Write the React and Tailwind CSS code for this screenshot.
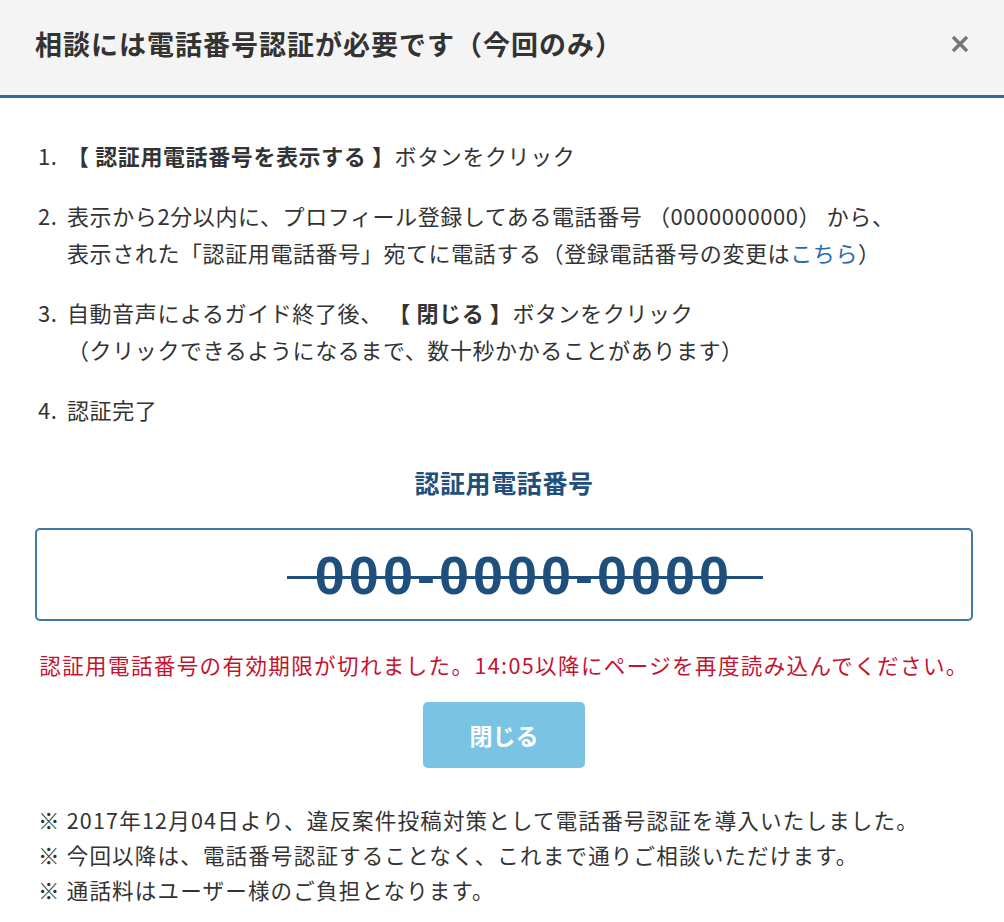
import React from 'react';

const FONT = "font-['Noto_Sans_CJK_JP','Noto_Sans',sans-serif]";

function Step({ num, children }) {
  return (
    <li className="flex">
      <span className="w-[29px] shrink-0">{num}.</span>
      <div>{children}</div>
    </li>
  );
}

export default function App() {
  return (
    <div className={`w-[1004px] h-[922px] bg-white text-[#333] ${FONT}`}>
      {/* Header */}
      <header className="h-[98px] bg-[#f4f4f4] border-b-[3px] border-[#2b68a4] flex items-center justify-between pl-[35px] pr-[32px] pb-[8px]">
        <h1 className="text-[27px] font-bold tracking-[1px] leading-none">
          相談には電話番号認証が必要です（今回のみ）
        </h1>
        <button className="w-[24px] h-[24px] flex items-center justify-center">
          <svg width="18" height="18" viewBox="0 0 18 18">
            <path d="M2 2 L16 16 M16 2 L2 16" stroke="#777" strokeWidth="3.5" strokeLinecap="butt" />
          </svg>
        </button>
      </header>

      {/* Body */}
      <main className="pl-[35px] pr-[31px] pt-[39px]">
        <ol className="pl-[3px] flex flex-col gap-[23px] text-[22px] leading-[37px] tracking-[0.6px]">
          <Step num={1}>
            <b className="font-bold">【 認証用電話番号を表示する 】</b>ボタンをクリック
          </Step>
          <Step num={2}>
            表示から2分以内に、プロフィール登録してある電話番号 （0000000000） から、
            <br />
            表示された「認証用電話番号」宛てに電話する（登録電話番号の変更は
            <a className="text-[#2a6bb0]">こちら</a>）
          </Step>
          <Step num={3}>
            自動音声によるガイド終了後、 <b className="font-bold">【 閉じる 】</b>ボタンをクリック
            <br />
            （クリックできるようになるまで、数十秒かかることがあります）
          </Step>
          <Step num={4}>認証完了</Step>
        </ol>

        <h2 className="mt-[39px] text-center text-[25px] leading-[30px] font-bold tracking-[0.6px] text-[#1f4f7c]">
          認証用電話番号
        </h2>

        <div className="mt-[31px] h-[93px] border-2 border-[#3d77ad] rounded-[5px] flex items-center justify-center pl-[40px]">
          <span className="relative inline-block font-['Liberation_Sans',Arial,sans-serif] font-bold text-[54px] leading-none tracking-[4px] text-[#1f4f7c]">
            000-0000-0000
            <span className="absolute left-[-28px] right-[-30px] top-[53%] h-[3px] bg-[#1f4f7c]" />
          </span>
        </div>

        <p className="mt-[29px] text-center text-[21.5px] leading-[30px] text-[#c4122f] tracking-[1.4px]">
          認証用電話番号の有効期限が切れました。14:05以降にページを再度読み込んでください。
        </p>

        <div className="mt-[22px] flex justify-center">
          <button className="w-[162px] h-[66px] rounded-[5px] bg-[#79c4e5] text-white font-bold text-[23px]">
            閉じる
          </button>
        </div>

        <ul className="mt-[34px] pl-[3px] text-[21.5px] leading-[35px] tracking-[1.2px]">
          <li>※ 2017年12月04日より、違反案件投稿対策として電話番号認証を導入いたしました。</li>
          <li>※ 今回以降は、電話番号認証することなく、これまで通りご相談いただけます。</li>
          <li>※ 通話料はユーザー様のご負担となります。</li>
        </ul>
      </main>
    </div>
  );
}
